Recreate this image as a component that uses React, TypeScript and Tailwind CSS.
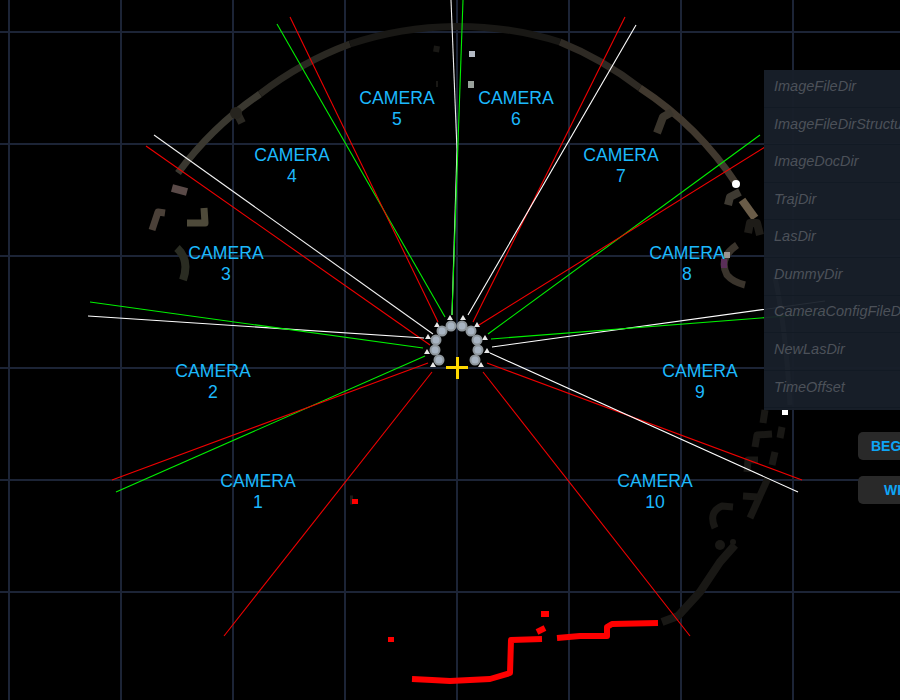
const GRID_X = [9, 121, 233, 345, 457, 569, 681, 793]
const GRID_Y = [32, 144, 256, 368, 480, 592]

const RAYS: { c: string; p: number[] }[] = [
  { c: '#f00000', p: [146, 146, 430, 345] },
  { c: '#f0f0f0', p: [154, 135, 433, 334] },
  { c: '#00f000', p: [277, 24, 445, 317] },
  { c: '#f00000', p: [290, 17, 438, 322] },
  { c: '#f0f0f0', p: [451, 0, 457, 150] },
  { c: '#f0f0f0', p: [457, 150, 452, 315] },
  { c: '#00f000', p: [463, 0, 452, 315] },
  { c: '#f00000', p: [625, 17, 473, 322] },
  { c: '#ffffff', p: [636, 25, 468, 315] },
  { c: '#00f000', p: [760, 135, 488, 334] },
  { c: '#f00000', p: [765, 147, 479, 325] },
  { c: '#ffffff', p: [825, 301, 492, 347] },
  { c: '#00f000', p: [825, 313, 491, 339] },
  { c: '#ffffff', p: [88, 316, 424, 338] },
  { c: '#00f000', p: [90, 302, 423, 348] },
  { c: '#00f000', p: [116, 492, 425, 356] },
  { c: '#f00000', p: [112, 480, 428, 363] },
  { c: '#f00000', p: [224, 636, 432, 372] },
  { c: '#f00000', p: [690, 636, 483, 372] },
  { c: '#f00000', p: [802, 480, 487, 363] },
  { c: '#ffffff', p: [798, 492, 490, 353] },
]

const ARCS: { c: string; d: string; w?: number }[] = [
  { c: '#3a3830', d: 'M178 173 A341 341 0 0 1 260 94' },
  { c: '#2a2822', d: 'M260 94 A341 341 0 0 1 350 44' },
  { c: '#191815', d: 'M350 44 A341 341 0 0 1 560 42' },
  { c: '#2e2a24', d: 'M560 42 A341 341 0 0 1 640 88' },
  { c: '#40382e', d: 'M640 88 A335 335 0 0 1 737 185' },
  { c: '#2a2822', d: 'M237 113 L242 123', w: 8 },
  { c: '#5a4a48', d: 'M172 188 L187 192', w: 8 },
  { c: '#4a4038', d: 'M152 230 L158 212 L165 213', w: 7 },
  { c: '#4e4a3a', d: 'M204 208 L205 223 L187 223', w: 7 },
  { c: '#2a2c22', d: 'M177 248 Q190 260 183 280', w: 8 },
  { c: '#3a352c', d: 'M657 133 L663 117 L672 112', w: 8 },
  { c: '#3e3a32', d: 'M728 205 L730 197 L740 192', w: 8 },
  { c: '#6a5c48', d: 'M742 200 L755 218', w: 8 },
  { c: '#1e1c18', d: 'M748 233 L750 223 L757 223 L760 235', w: 8 },
  { c: '#3a342c', d: 'M737 245 Q718 258 727 275 Q733 282 745 285', w: 7 },
  { c: '#191815', d: 'M765 410 L763 423' },
  { c: '#191815', d: 'M755 447 L757 435 L772 434' },
  { c: '#191815', d: 'M780 438 L782 427' },
  { c: '#191815', d: 'M747 472 L748 460 L758 460' },
  { c: '#191815', d: 'M772 465 L775 452' },
  { c: '#191815', d: 'M750 518 L768 478' },
  { c: '#191815', d: 'M743 496 L758 497' },
  { c: '#191815', d: 'M715 528 Q708 512 722 506 L733 507' },
  { c: '#191815', d: 'M662 622 L678 616 L700 592 L720 562 L735 545', w: 8 },
  { c: '#191815', d: 'M437 46 L436 52', w: 6 },
  { c: '#191815', d: 'M436 84 L438 84', w: 6 },
  { c: '#1c1a17', d: 'M350 500 L353 500', w: 9 },
]

const RED_TRAILS = [
  'M412 679 L432 680 L450 681 L490 679 L510 673 L511 640 L542 639',
  'M537 632 L545 628',
  'M541 614 L549 614',
  'M557 638 L580 636 L607 636 L607 627 L612 624 L658 623',
]

const NODES = [
  [439, 360], [435, 350], [436, 340], [442, 331], [451, 326],
  [462, 326], [471, 331], [477, 340], [478, 350], [475, 360],
]

const MARKERS = [
  [433, 365], [427, 352], [428, 337], [437, 325], [450, 318],
  [463, 318], [477, 325], [485, 338], [487, 351], [481, 365],
]

const CAMERAS = [
  { n: 1, x: 258, y: 471 },
  { n: 2, x: 213, y: 361 },
  { n: 3, x: 226, y: 243 },
  { n: 4, x: 292, y: 145 },
  { n: 5, x: 397, y: 88 },
  { n: 6, x: 516, y: 88 },
  { n: 7, x: 621, y: 145 },
  { n: 8, x: 687, y: 243 },
  { n: 9, x: 700, y: 361 },
  { n: 10, x: 655, y: 471 },
]

const FIELDS = [
  'ImageFileDir',
  'ImageFileDirStructu',
  'ImageDocDir',
  'TrajDir',
  'LasDir',
  'DummyDir',
  'CameraConfigFileD',
  'NewLasDir',
  'TimeOffset',
]

function Scene() {
  return (
    <svg className="absolute inset-0" width={900} height={700} viewBox="0 0 900 700">
      {GRID_X.map((x) => (
        <rect key={x} x={x - 1} y={0} width={2} height={700} fill="#1c2436" />
      ))}
      {GRID_Y.map((y) => (
        <rect key={y} x={0} y={y - 1} width={900} height={2} fill="#1c2436" />
      ))}
      {ARCS.map((a) => (
        <path key={a.d} d={a.d} fill="none" stroke={a.c} strokeWidth={a.w ?? 7} strokeLinejoin="round" />
      ))}
      <circle cx={720} cy={545} r={5} fill="#191815" />
      <circle cx={733} cy={542} r={3} fill="#191815" />
      <circle cx={236} cy={113} r={6} fill="#26241e" />
      <rect x={721} y={259} width={6} height={9} fill="#5a2e58" />
      <rect x={724} y={252} width={6} height={6} fill="#9a9490" />
      <path d="M775 277 Q786 330 790 405" fill="none" stroke="#55554f" strokeWidth={5} />
      <rect x={469} y={51} width={6} height={6} fill="#b4bac4" />
      <rect x={468} y={81} width={6} height={7} fill="#98a09a" />
      {RAYS.map((r) => (
        <line key={r.p.join()} x1={r.p[0]} y1={r.p[1]} x2={r.p[2]} y2={r.p[3]} stroke={r.c} strokeWidth={1.1} />
      ))}
      {RED_TRAILS.map((d) => (
        <path key={d} d={d} fill="none" stroke="#ff0000" strokeWidth={6} strokeLinejoin="round" />
      ))}
      <rect x={388} y={637} width={6} height={5} fill="#ff0000" />
      <rect x={352} y={499} width={6} height={5} fill="#ff0000" />
      <circle cx={736} cy={184} r={4} fill="#ffffff" />
      <rect x={782} y={410} width={6} height={5} fill="#ffffff" />
      {MARKERS.map(([x, y]) => (
        <path key={`${x}-${y}`} d={`M${x} ${y - 3} L${x + 3} ${y + 2} L${x - 3} ${y + 2} Z`} fill="#e8e8e8" />
      ))}
      {NODES.map(([x, y]) => (
        <g key={`${x}-${y}`}>
          <circle cx={x} cy={y} r={5.5} fill="#8e969c" />
          <circle cx={x} cy={y} r={3.5} fill="#a8b4c2" />
        </g>
      ))}
      <rect x={446} y={366} width={22} height={3} fill="#ffd800" />
      <rect x={456} y={357} width={3} height={22} fill="#ffd800" />
    </svg>
  )
}

function CameraLabel({ n, x, y }: { n: number; x: number; y: number }) {
  return (
    <div
      className="absolute -translate-x-1/2 text-center text-[17.6px] leading-[20.5px] text-[#1cb8fc] whitespace-nowrap"
      style={{ left: x, top: y }}
    >
      <div>CAMERA</div>
      <div>{n}</div>
    </div>
  )
}

function ConfigPanel() {
  return (
    <div className="absolute left-[764px] top-[70px] w-[136px] h-[340px] flex flex-col bg-[#18202a]/95">
      {FIELDS.map((f) => (
        <div
          key={f}
          className="h-[37.6px] shrink-0 flex items-center pl-[10px] pb-[3px] border-b border-[#121a24] text-[14.5px] italic text-[#4c5159] whitespace-nowrap"
        >
          {f}
        </div>
      ))}
    </div>
  )
}

function SideButton({ label, top, pad }: { label: string; top: string; pad: string }) {
  return (
    <div className={`absolute left-[858px] w-[42px] h-[28px] rounded-l-[5px] bg-[#292929] flex items-center text-[14px] font-bold text-[#0ea5f5] whitespace-nowrap ${top} ${pad}`}>
      {label}
    </div>
  )
}

export default function App() {
  return (
    <div className="relative w-[900px] h-[700px] overflow-hidden bg-black font-['Liberation_Sans',Arial,sans-serif]">
      <Scene />
      {CAMERAS.map((c) => (
        <CameraLabel key={c.n} {...c} />
      ))}
      <ConfigPanel />
      <SideButton label="BEG" top="top-[432px]" pad="pl-[13px]" />
      <SideButton label="WI" top="top-[476px]" pad="pl-[26px]" />
    </div>
  )
}
